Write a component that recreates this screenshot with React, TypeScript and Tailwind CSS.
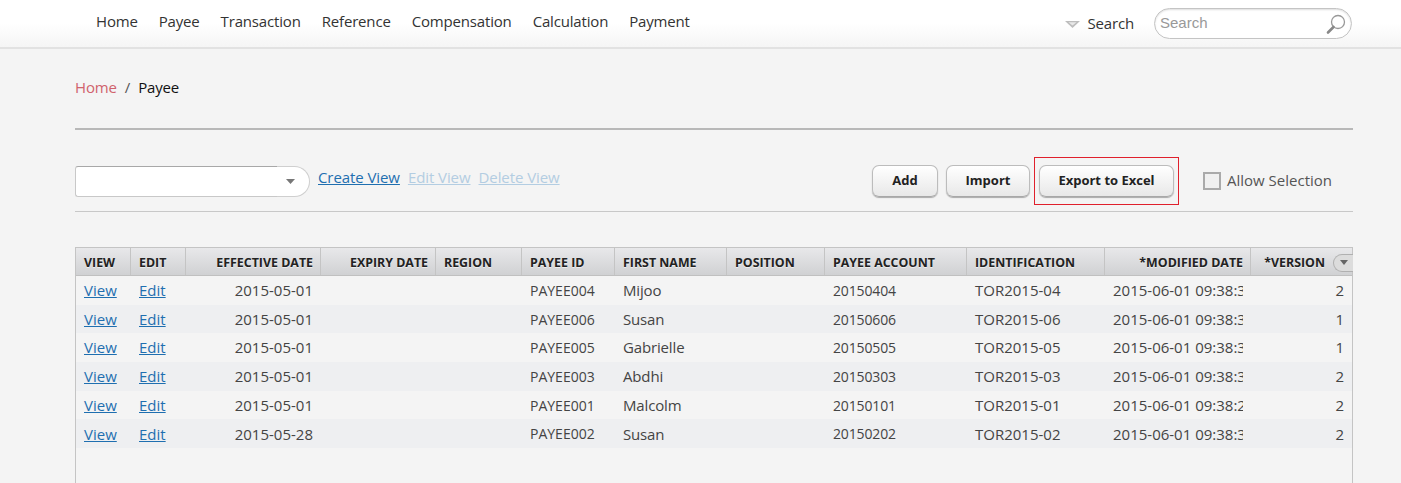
const navItems = ["Home", "Payee", "Transaction", "Reference", "Compensation", "Calculation", "Payment"];

const rows = [
  { date: "2015-05-01", id: "PAYEE004", name: "Mijoo", account: "20150404", ident: "TOR2015-04", modified: "2015-06-01 09:38:33", version: 2 },
  { date: "2015-05-01", id: "PAYEE006", name: "Susan", account: "20150606", ident: "TOR2015-06", modified: "2015-06-01 09:38:33", version: 1 },
  { date: "2015-05-01", id: "PAYEE005", name: "Gabrielle", account: "20150505", ident: "TOR2015-05", modified: "2015-06-01 09:38:33", version: 1 },
  { date: "2015-05-01", id: "PAYEE003", name: "Abdhi", account: "20150303", ident: "TOR2015-03", modified: "2015-06-01 09:38:33", version: 2 },
  { date: "2015-05-01", id: "PAYEE001", name: "Malcolm", account: "20150101", ident: "TOR2015-01", modified: "2015-06-01 09:38:27", version: 2 },
  { date: "2015-05-28", id: "PAYEE002", name: "Susan", account: "20150202", ident: "TOR2015-02", modified: "2015-06-01 09:38:33", version: 2 },
];

const headers = [
  { label: "VIEW", right: false },
  { label: "EDIT", right: false },
  { label: "EFFECTIVE DATE", right: true },
  { label: "EXPIRY DATE", right: true },
  { label: "REGION", right: false },
  { label: "PAYEE ID", right: false },
  { label: "FIRST NAME", right: false },
  { label: "POSITION", right: false },
  { label: "PAYEE ACCOUNT", right: false },
  { label: "IDENTIFICATION", right: false },
  { label: "*MODIFIED DATE", right: true },
];

const gridCols = "grid grid-cols-[55px_55px_135px_115px_86px_93px_112px_98px_142px_138px_146px_101px]";

function Button({ label, width }: { label: string; width: string }) {
  return (
    <button className={`h-8 ${width} rounded-[7px] border border-[#bcbcbc] border-b-[#a8a8a8] bg-gradient-to-b from-white to-[#e8e8e8] text-[13px] font-bold tracking-normal text-[#222] shadow-[0_1px_1px_#aaa]`}>
      {label}
    </button>
  );
}

export default function App() {
  return (
    <div className="h-[483px] overflow-hidden bg-[#f4f4f4] font-['Open_Sans','Noto_Sans',sans-serif] text-[15px] tracking-[-0.15px] text-[#444]">
      {/* Top nav */}
      <div className="flex h-[49px] items-center justify-between border-b-2 border-[#e2e2e2] bg-gradient-to-b from-white from-50% to-[#f5f5f5] pl-[96px] pr-[49px]">
        <div className="flex -translate-y-[2px] gap-[21px] tracking-[-0.17px] text-[#333]">
          {navItems.map((item) => (
            <span key={item}>{item}</span>
          ))}
        </div>
        <div className="flex items-center">
          <svg width="15" height="7" viewBox="0 0 15 7" className="mr-[7px] translate-y-[1px]">
            <path d="M0 0h15L7.5 7z" fill="#bdbdbd" />
            <path d="M3.5 1.2h8L7.5 4.6z" fill="#e8e8e8" />
          </svg>
          <span className="mr-5 text-[#333]">Search</span>
          <div className="flex h-[31px] w-[198px] items-center justify-between rounded-2xl border border-[#c4c4c4] bg-white pl-[5px] pr-[4px] shadow-[inset_0_1px_2px_#ddd]">
            <span className="font-['Liberation_Sans',sans-serif] tracking-normal text-[#999]">Search</span>
            <svg width="22" height="22" viewBox="0 0 22 22" fill="none">
              <circle cx="13" cy="9" r="6.5" stroke="#999" strokeWidth="1.3" />
              <path d="M8.5 14L3 19.5" stroke="#888" strokeWidth="2.6" strokeLinecap="round" />
            </svg>
          </div>
        </div>
      </div>

      <div className="pl-[75px] pr-[48px]">
        {/* Breadcrumb */}
        <div className="flex h-[81px] items-center gap-[8px] border-b-2 border-[#b8b8b8] pb-[3px] text-[#111]">
          <span className="text-[#d0626c]">Home</span>
          <span className="text-[#555]">/</span>
          <span>Payee</span>
        </div>

        {/* Toolbar */}
        <div className="flex h-[82px] items-center justify-between border-b border-[#c8c8c8] pt-[21px]">
          <div className="flex items-center gap-2 tracking-[-0.08px]">
            <div className="flex h-[31px] w-[235px]">
              <div className="w-[202px] rounded-l-[3px] border border-r-0 border-[#c8c8c8] border-t-[#a8a8a8] bg-white" />
              <div className="flex flex-1 items-center justify-end rounded-r-2xl border border-l-0 border-[#cfcfcf] bg-white pr-[14px]">
                <svg width="9" height="5" viewBox="0 0 9 5">
                  <path d="M0 0h9L4.5 5z" fill="#777" />
                </svg>
              </div>
            </div>
            <a className="-translate-y-[4px] text-[#1f6fb0] underline">Create View</a>
            <a className="-translate-y-[4px] text-[#b3cde2] underline">Edit View</a>
            <a className="-translate-y-[4px] text-[#b3cde2] underline">Delete View</a>
          </div>
          <div className="flex items-center pr-[21px]">
            <Button label="Add" width="w-[66px]" />
            <div className="ml-2">
              <Button label="Import" width="w-[84px]" />
            </div>
            <div className="ml-[4px] flex h-12 w-[145px] items-center justify-center border border-[#e0202c]">
              <Button label="Export to Excel" width="w-[135px]" />
            </div>
            <span className="ml-6 h-[18px] w-[18px] border-2 border-[#aaa] bg-[#f0f0f0]" />
            <span className="ml-[6px] -translate-y-[1px] tracking-normal text-[#555]">Allow Selection</span>
          </div>
        </div>

        {/* Grid */}
        <div className="mt-[35px] h-[300px] border border-b-0 border-[#c4c4c4]">
          <div className={`${gridCols} h-[28px] border-b border-[#c0c0c0] bg-gradient-to-b from-[#e8e8ea] to-[#d0d1d3] text-[12.4px] font-bold tracking-normal text-[#222] [text-shadow:0_1px_0_#eee]`}>
            {headers.map((h) => (
              <div
                key={h.label}
                className={`flex items-center whitespace-nowrap border-r border-[#c4c4c4] pt-[4px] ${h.right ? "justify-end pl-2 pr-[7px]" : "px-2"}`}
              >
                {h.label}
              </div>
            ))}
            <div className="flex items-center justify-end">
              <span className="mr-[8px] pt-[4px]">*VERSION</span>
              <span className="mr-[-1px] flex h-[18px] w-5 translate-y-[1px] items-center justify-center rounded-l-full border border-r-0 border-[#b0b0b0] bg-[#dcdcdc]">
                <svg width="8" height="5" viewBox="0 0 8 5">
                  <path d="M0 0h8L4 5z" fill="#666" />
                </svg>
              </span>
            </div>
          </div>
          {rows.map((r, i) => (
            <div
              key={r.id}
              className={`${gridCols} h-[28.7px] items-center whitespace-nowrap ${i % 2 === 1 ? "bg-[#eeeff1]" : ""}`}
            >
              <a className="px-2 tracking-normal text-[#1f6fb0] underline">View</a>
              <a className="px-2 tracking-normal text-[#1f6fb0] underline">Edit</a>
              <div className="px-2 text-right tracking-normal">{r.date}</div>
              <div />
              <div />
              <div className="px-2 text-[14px] tracking-normal">{r.id}</div>
              <div className="px-2">{r.name}</div>
              <div />
              <div className="px-2 text-[14px]">{r.account}</div>
              <div className="px-2 tracking-normal">{r.ident}</div>
              <div className="px-2">
                <div className="overflow-hidden tracking-normal">{r.modified}</div>
              </div>
              <div className="px-2 text-right">{r.version}</div>
            </div>
          ))}
        </div>
      </div>
    </div>
  );
}
